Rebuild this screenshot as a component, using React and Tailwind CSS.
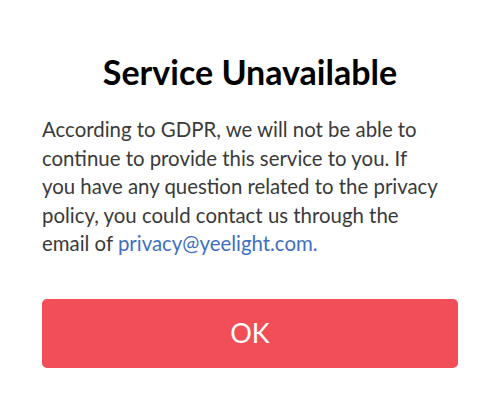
export default function App() {
  return (
    <div className="w-[500px] h-[409px] bg-white flex flex-col px-[42px] pt-[51px] font-['Lato','Open_Sans',sans-serif]">
      {/* 标题 */}
      <h1 className="text-center text-[34px] font-bold text-black leading-[42px] whitespace-nowrap">
        Service Unavailable
      </h1>

      {/* 说明文字 */}
      <p className="mt-[22px] text-[20.4px] leading-[28.6px] text-[#3a3a3a] whitespace-nowrap">
        According to GDPR, we will not be able to
        <br />
        continue to provide this service to you. If
        <br />
        you have any question related to the privacy
        <br />
        policy, you could contact us through the
        <br />
        email of <span className="text-[#3f6fbf]">privacy@yeelight.com.</span>
      </p>

      {/* 按钮 */}
      <button className="mt-[41px] h-[69px] w-full rounded-[5px] bg-[#f24e58] text-white text-[27px]">
        OK
      </button>
    </div>
  )
}
